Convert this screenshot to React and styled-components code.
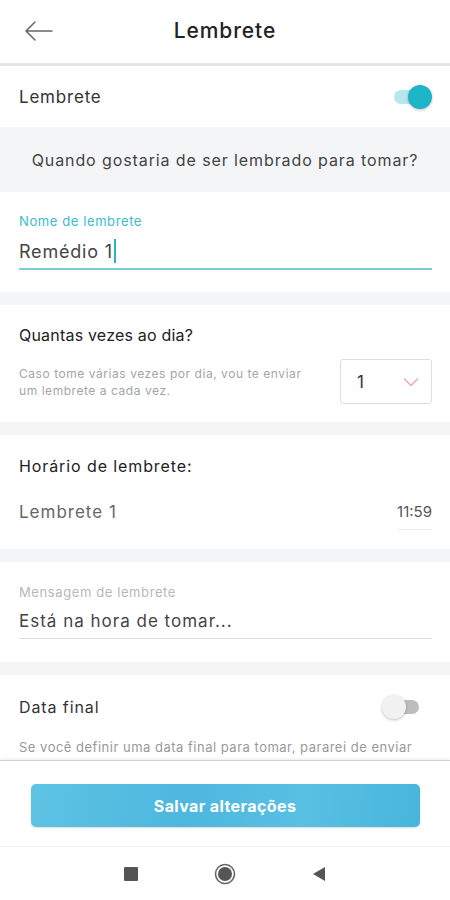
import React from "react";
import styled, { createGlobalStyle } from "styled-components";

const Global = createGlobalStyle`
  html, body { margin: 0; padding: 0; background: #ffffff; }
  body { font-family: Inter, "Open Sans", "Liberation Sans", sans-serif; }
  * { box-sizing: border-box; }
`;

const Screen = styled.div`
  width: 450px;
  height: 900px;
  display: flex;
  flex-direction: column;
  background: #ffffff;
  overflow: hidden;
`;

const Header = styled.header`
  height: 66px;
  flex: none;
  display: grid;
  grid-template-columns: 60px 1fr 60px;
  align-items: center;
  border-bottom: 3px solid #e4e4e4;
  padding-bottom: 2px;
`;

const BackBtn = styled.button`
  border: 0;
  background: none;
  padding: 0 0 0 24px;
  display: flex;
  align-items: center;
  color: #555;
`;

const Title = styled.h1`
  margin: 0;
  text-align: center;
  font-size: 21px;
  font-weight: 500;
  color: #222;
  letter-spacing: 0.9px;
`;

const Scroll = styled.div`
  flex: 1;
  overflow: hidden;
  background: #f4f5f7;
  display: flex;
  flex-direction: column;
  gap: 13px;
`;

const Block = styled.div`
  display: flex;
  flex-direction: column;
`;

const ToggleRow = styled.div`
  height: ${(p) => p.$h || 61}px;
  background: #fff;
  display: flex;
  align-items: center;
  justify-content: space-between;
  padding: 0 ${(p) => p.$pr || 20}px 0 19px;
`;

const RowLabel = styled.span`
  font-size: ${(p) => p.$size || 17}px;
  letter-spacing: ${(p) => p.$ls || 0.8}px;
  color: #333;
`;

const Question = styled.div`
  height: 65px;
  display: flex;
  align-items: center;
  justify-content: center;
  font-size: 16px;
  letter-spacing: 0.9px;
  color: #444;
  background: #f4f5f7;
`;

const Card = styled.section`
  background: #fff;
  height: ${(p) => p.$h}px;
  padding: ${(p) => p.$pt}px 18px 0 19px;
  display: flex;
  flex-direction: column;
`;

const FieldLabel = styled.label`
  font-size: 13px;
  letter-spacing: 0.6px;
  color: ${(p) => (p.$active ? "#3bbccd" : "#b4b8bd")};
  margin-bottom: ${(p) => p.$mb || 9}px;
`;

const FieldValue = styled.div`
  font-size: ${(p) => p.$size || 17}px;
  letter-spacing: ${(p) => p.$ls || 1}px;
  color: #444;
  padding-bottom: ${(p) => p.$pb || 6}px;
  border-bottom: ${(p) => (p.$active ? "2px solid #7ccdd6" : "1.5px solid #dcdcdc")};
  display: flex;
  align-items: center;
`;

const Caret = styled.span`
  display: inline-block;
  width: 2px;
  height: 24px;
  background: #2bb3c6;
  margin-left: 1px;
`;

const SectionTitle = styled.div`
  font-size: 16px;
  letter-spacing: ${(p) => p.$ls || 0.2}px;
  color: #222;
`;

const DescRow = styled.div`
  display: flex;
  align-items: center;
  justify-content: space-between;
  margin-top: 14px;
`;

const Desc = styled.p`
  margin: 0;
  font-size: 12px;
  letter-spacing: 0.55px;
  line-height: 17px;
  color: #a2a6aa;
  width: 305px;
`;

const Select = styled.div`
  width: 92px;
  height: 45px;
  border: 1px solid #dedede;
  border-radius: 3px;
  display: flex;
  align-items: center;
  justify-content: space-between;
  padding: 0 12px 0 16px;
  font-size: 17px;
  color: #333;
`;

const TimeRow = styled.div`
  display: flex;
  justify-content: space-between;
  align-items: flex-start;
  margin-top: 26px;
`;

const TimeName = styled.span`
  font-size: 17px;
  letter-spacing: 1px;
  color: #666;
`;

const TimeValue = styled.span`
  font-size: 15px;
  color: #555;
  padding-bottom: 8px;
  border-bottom: 1px solid #eeeeee;
`;

const SmallText = styled.p`
  margin: 0;
  font-size: 13px;
  letter-spacing: 0.5px;
  color: #999;
  padding: 0 19px;
  background: #fff;
  white-space: nowrap;
  height: 21px;
  overflow: hidden;
`;

const Footer = styled.div`
  flex: none;
  height: 87px;
  background: #fff;
  border-top: 1px solid #c9d3da;
  box-shadow: 0 -1px 3px rgba(0,0,0,0.08);
  display: flex;
  align-items: flex-start;
  justify-content: center;
  padding-top: 23px;
  border-bottom: 1px solid #f0f0f0;
`;

const SaveBtn = styled.button`
  width: 389px;
  height: 43px;
  border: 0;
  border-radius: 5px;
  background: linear-gradient(100deg, #5ec3e4 0%, #4db7de 40%, #58c0e3 70%, #48b5dc 100%);
  color: #fff;
  font-family: inherit;
  font-size: 16px;
  letter-spacing: 0.4px;
  font-weight: 700;
  box-shadow: 0 1px 2px rgba(0,0,0,0.15);
`;

const NavBar = styled.nav`
  flex: none;
  height: 53px;
  display: flex;
  align-items: center;
  justify-content: center;
  background: #fff;
`;

const NavSlot = styled.div`
  width: 94px;
  display: flex;
  justify-content: center;
`;

const SwitchTrack = styled.div`
  position: relative;
  width: ${(p) => (p.$on ? 36 : 30)}px;
  height: 14px;
  border-radius: 7px;
  background: ${(p) => (p.$on ? "#b7e6ec" : "#bdbdbd")};
`;

const SwitchThumb = styled.div`
  position: absolute;
  top: -5px;
  ${(p) => (p.$on ? "right: -2px;" : "left: -7px;")}
  width: 24px;
  height: 24px;
  border-radius: 50%;
  background: ${(p) => (p.$on ? "#1db3c8" : "#f1f1f1")};
  box-shadow: 0 1px 3px rgba(0,0,0,0.25);
`;

function Switch({ on }) {
  return (
    <SwitchTrack $on={on}>
      <SwitchThumb $on={on} />
    </SwitchTrack>
  );
}

export default function App() {
  return (
    <Screen>
      <Global />
      <Header>
        <BackBtn aria-label="Voltar">
          <svg width="30" height="22" viewBox="0 0 30 22" fill="none" stroke="#666" strokeWidth="1.5" strokeLinecap="round" strokeLinejoin="round">
            <path d="M28 11H2M11 2L2 11l9 9" />
          </svg>
        </BackBtn>
        <Title>Lembrete</Title>
        <span />
      </Header>
      <Scroll>
        <Block>
          <ToggleRow>
            <RowLabel>Lembrete</RowLabel>
            <Switch on />
          </ToggleRow>
          <Question>Quando gostaria de ser lembrado para tomar?</Question>
          <Card $h={100} $pt={21}>
            <FieldLabel $active $mb={10}>Nome de lembrete</FieldLabel>
            <FieldValue $active $size={18} $ls={0.8} $pb={5}>
              Remédio 1<Caret />
            </FieldValue>
          </Card>
        </Block>
        <Card $h={119} $pt={20}>
          <SectionTitle>Quantas vezes ao dia?</SectionTitle>
          <DescRow>
            <Desc>Caso tome várias vezes por dia, vou te enviar um lembrete a cada vez.</Desc>
            <Select>
              <span>1</span>
              <svg width="16" height="10" viewBox="0 0 16 10" fill="none" stroke="#f2a6b0" strokeWidth="1.4">
                <path d="M1 1.5l7 7 7-7" />
              </svg>
            </Select>
          </DescRow>
        </Card>
        <Card $h={116} $pt={21}>
          <SectionTitle $ls={0.9}>Horário de lembrete:</SectionTitle>
          <TimeRow>
            <TimeName>Lembrete 1</TimeName>
            <TimeValue>11:59</TimeValue>
          </TimeRow>
        </Card>
        <Card $h={102} $pt={22}>
          <FieldLabel $mb={11}>Mensagem de lembrete</FieldLabel>
          <FieldValue $pb={7}>Está na hora de tomar...</FieldValue>
        </Card>
        <Block>
          <ToggleRow $h={64} $pr={31}>
            <RowLabel $size={16} $ls={0.9}>Data final</RowLabel>
            <Switch />
          </ToggleRow>
          <SmallText>Se você definir uma data final para tomar, pararei de enviar</SmallText>
        </Block>
      </Scroll>
      <Footer>
        <SaveBtn>Salvar alterações</SaveBtn>
      </Footer>
      <NavBar>
        <NavSlot>
          <svg width="14" height="14" viewBox="0 0 14 14"><rect x="0" y="0" width="14" height="14" rx="1" fill="#555" /></svg>
        </NavSlot>
        <NavSlot>
          <svg width="22" height="22" viewBox="0 0 22 22"><circle cx="11" cy="11" r="9.5" fill="none" stroke="#666" strokeWidth="1.6" /><circle cx="11" cy="11" r="7" fill="#555" /></svg>
        </NavSlot>
        <NavSlot>
          <svg width="14" height="16" viewBox="0 0 14 16"><path d="M13 1L1 8l12 7z" fill="#555" /></svg>
        </NavSlot>
      </NavBar>
    </Screen>
  );
}
